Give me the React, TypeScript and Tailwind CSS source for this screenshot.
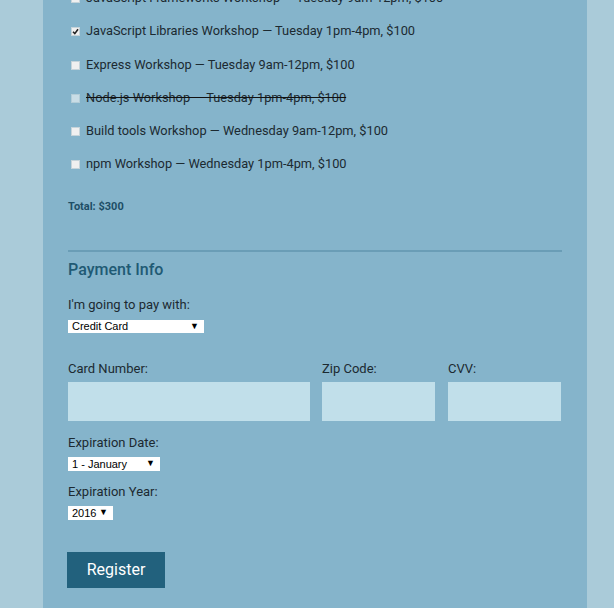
import React from 'react';

interface Workshop {
    id: string;
    label: string;
    checked?: boolean;
    disabled?: boolean;
    gap: string;
}

const workshops: Workshop[] = [
    { id: 'js-frameworks', label: 'JavaScript Frameworks Workshop — Tuesday 9am-12pm, $100', gap: '-mt-[12px]' },
    { id: 'js-libs', label: 'JavaScript Libraries Workshop — Tuesday 1pm-4pm, $100', checked: true, gap: 'mt-[13px]' },
    { id: 'express', label: 'Express Workshop — Tuesday 9am-12pm, $100', gap: 'mt-[14px]' },
    { id: 'node', label: 'Node.js Workshop — Tuesday 1pm-4pm, $100', disabled: true, gap: 'mt-[13px]' },
    { id: 'build-tools', label: 'Build tools Workshop — Wednesday 9am-12pm, $100', gap: 'mt-[13px]' },
    { id: 'npm', label: 'npm Workshop — Wednesday 1pm-4pm, $100', gap: 'mt-[13px]' },
];

const Check = ({ checked, disabled }: { checked?: boolean; disabled?: boolean }) => (
    <span
        className={`w-[9px] h-[9px] shrink-0 border flex items-center justify-center ${
            disabled ? 'bg-[#c9dde6] border-[#b3cdd8]' : 'bg-[#f0f0f0] border-[#c6d4da]'
        }`}
    >
        {checked && (
            <svg width="7" height="7" viewBox="0 0 7 7">
                <path d="M1 3.8 L2.8 5.6 L6 1.2" fill="none" stroke="#222" strokeWidth="1.6" />
            </svg>
        )}
    </span>
);

const FakeSelect = ({ value, width, height }: { value: string; width: string; height: string }) => (
    <div className={`relative ${width} ${height} bg-white flex items-center pl-[4px] text-[11px] text-black font-['Liberation_Sans',Arial,sans-serif]`}>
        <span>{value}</span>
        <span className="absolute right-[5px] inset-y-0 flex items-center text-[9px]">▼</span>
    </div>
);

const App = () => {
    return (
        <div className="h-[608px] overflow-hidden bg-[#aacbd9] font-['Roboto',sans-serif]">
            <div className="flow-root ml-[43px] w-[544px] h-[608px] bg-[#85b4cb] px-[25px]">
                <div className="flex flex-col">
                    {workshops.map((w) => (
                        <label key={w.id} className={`${w.gap} h-[20px] flex items-center gap-[6px] pl-[3px] text-[12.8px] leading-[20px] text-[#1c2a31]`}>
                            <Check checked={w.checked} disabled={w.disabled} />
                            <span className={w.disabled ? 'line-through decoration-[#111]' : ''}>{w.label}</span>
                        </label>
                    ))}
                </div>

                <p className="mt-[26px] text-[11px] leading-[14px] font-bold text-[#1d4e66]">Total: $300</p>

                <div className="mt-[36px] h-[2px] bg-[#6a9db6]" />

                <h2 className="mt-[8px] text-[16px] leading-[20px] font-medium text-[#1f5a74]">Payment Info</h2>

                <p className="mt-[15px] text-[13px] leading-[20px] text-[#1c2a31]">I'm going to pay with:</p>
                <div className="mt-[5px]">
                    <FakeSelect value="Credit Card" width="w-[136px]" height="h-[13px]" />
                </div>

                <div className="mt-[26px] flex">
                    <div className="w-[242px]">
                        <p className="text-[13px] leading-[20px] text-[#1c2a31]">Card Number:</p>
                        <div className="mt-[3px] h-[39px] bg-[#c1dfea]" />
                    </div>
                    <div className="w-[113px] ml-[12px]">
                        <p className="text-[13px] leading-[20px] text-[#1c2a31]">Zip Code:</p>
                        <div className="mt-[3px] h-[39px] bg-[#c1dfea]" />
                    </div>
                    <div className="w-[113px] ml-[13px]">
                        <p className="text-[13px] leading-[20px] text-[#1c2a31]">CVV:</p>
                        <div className="mt-[3px] h-[39px] bg-[#c1dfea]" />
                    </div>
                </div>

                <p className="mt-[12px] text-[13px] leading-[20px] text-[#1c2a31]">Expiration Date:</p>
                <div className="mt-[4px]">
                    <FakeSelect value="1 - January" width="w-[92px]" height="h-[14px]" />
                </div>

                <p className="mt-[11px] text-[13px] leading-[20px] text-[#1c2a31]">Expiration Year:</p>
                <div className="mt-[4px]">
                    <FakeSelect value="2016" width="w-[45px]" height="h-[14px]" />
                </div>

                <button className="mt-[32px] -ml-[1px] w-[98px] h-[36px] bg-[#22617d] text-white text-[16px] font-['Roboto',sans-serif]">
                    Register
                </button>
            </div>
        </div>
    );
};

export default App;
